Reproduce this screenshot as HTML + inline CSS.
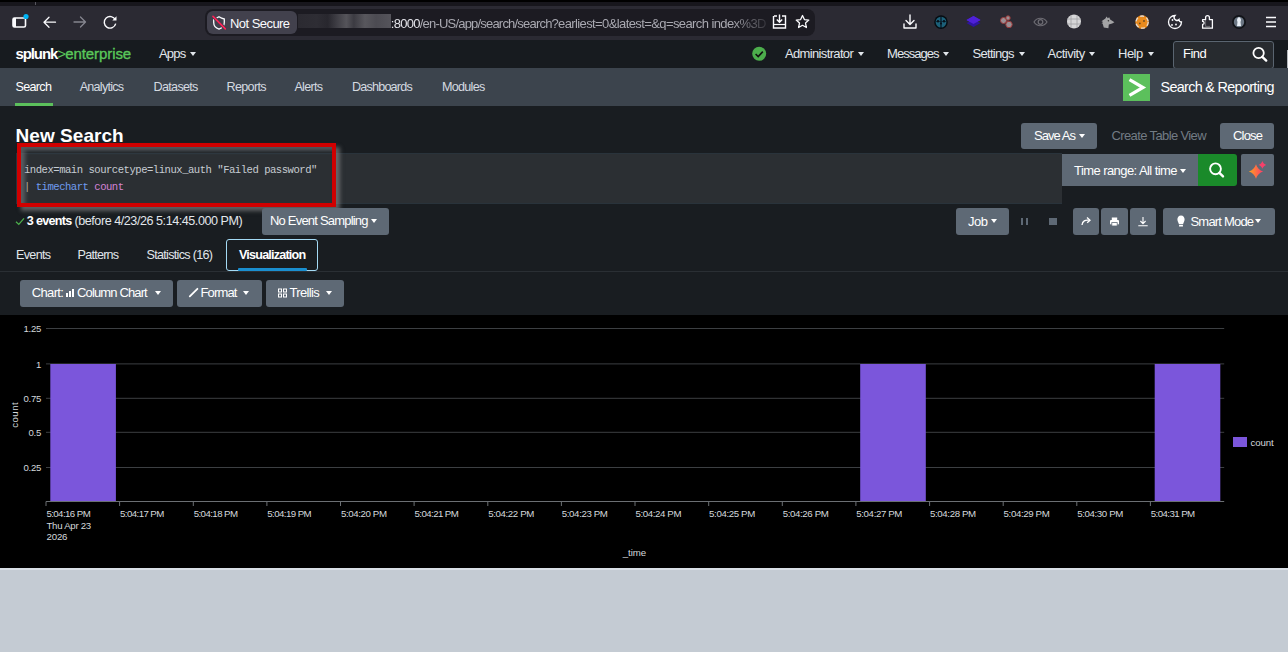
<!DOCTYPE html>
<html><head><meta charset="utf-8">
<style>
*{box-sizing:border-box;margin:0;padding:0}
html,body{width:1288px;height:652px;overflow:hidden;background:#c4cbd3;font-family:"Liberation Sans",sans-serif;position:relative}
.a{position:absolute}
.t{position:absolute;white-space:nowrap;line-height:1}
.btn{position:absolute;background:#5c6773;border-radius:3px}
svg{position:absolute;overflow:visible}
</style></head><body>
<!-- browser chrome -->
<div class="a" style="left:0;top:0;width:1288px;height:2px;background:#000"></div>
<div class="a" style="left:0;top:2px;width:1288px;height:4px;background:#17161c"></div>
<div class="a" style="left:35px;top:2px;width:1px;height:3px;background:#55545c"></div>
<div class="a" style="left:0;top:6px;width:1288px;height:34px;background:#2b2a33"></div>
<!-- tab/sidebar icon -->
<svg style="left:0;top:0" width="140" height="40">
 <rect x="13" y="18" width="12.5" height="9" rx="1.5" fill="none" stroke="#fbfbfe" stroke-width="1.6"/>
 <rect x="13" y="18" width="3" height="9" fill="#fbfbfe"/>
 <circle cx="26" cy="16.5" r="2.6" fill="#00b3f4"/>
 <path d="M44 22.2 H55.5 M49 17.2 L44 22.2 L49 27.2" fill="none" stroke="#fbfbfe" stroke-width="1.3" stroke-linecap="round" stroke-linejoin="round"/>
 <path d="M74 22 H85.5 M80.5 17 L85.5 22 L80.5 27" fill="none" stroke="#85858f" stroke-width="1.3" stroke-linecap="round" stroke-linejoin="round"/>
 <path d="M115.3 19.8 A5.8 5.8 0 1 0 115.7 23.6" fill="none" stroke="#fbfbfe" stroke-width="1.4"/>
 <path d="M112.3 20.5 L116.5 20.5 L116.5 16.3 Z" fill="#fbfbfe"/>
</svg>
<!-- url bar -->
<div class="a" style="left:205px;top:9px;width:610px;height:27px;background:#1c1b22;border-radius:8px"></div>
<div class="a" style="left:207px;top:11px;width:90px;height:23px;background:#42414d;border-radius:6px"></div>
<svg style="left:0;top:0" width="240" height="40">
 <path d="M219 16.8 C217.4 17.9 215.6 18.7 213.7 19 V22.6 C213.7 25.9 216 28.2 219 29.2 C222 28.2 224.3 25.9 224.3 22.6 V19 C222.4 18.7 220.6 17.9 219 16.8 Z" fill="none" stroke="#fbfbfe" stroke-width="1.3"/>
 <path d="M213 16.4 L225.3 28.9" stroke="#42414d" stroke-width="3.4"/>
 <path d="M213 16.4 L225.3 28.9" stroke="#ff2057" stroke-width="1.6" stroke-linecap="round"/>
</svg>
<div class="t" style="left:230px;top:17px;font-size:13px;color:#fbfbfe;letter-spacing:-0.55px">Not Secure</div>
<div class="t" style="left:390.8px;top:16.6px;font-size:13px;color:#a9a9b1;letter-spacing:-0.72px;width:378px;overflow:hidden;-webkit-mask-image:linear-gradient(90deg,#000 90%,rgba(0,0,0,.1) 100%)"><span style="color:#e2e2e8">:8000</span><span style="letter-spacing:-0.8px">/en-US/app/search/search?</span><span style="letter-spacing:-0.6px">earliest=0&amp;latest=&amp;q=search index%3D</span></div>
<div class="a" style="left:298px;top:13.5px;width:93px;height:14.5px;background:linear-gradient(90deg,#2b2a31 0%,#2e2d34 20%,#28272e 32%,#3f3e45 42%,#55545a 52%,#3c3b42 60%,#58575d 72%,#4c4b52 84%,#55545b 100%)"></div>
<svg style="left:0;top:0" width="820" height="40">
 <path d="M774 16 H777 M782 16 H785.5 V28 H773.5 V16" fill="none" stroke="#fbfbfe" stroke-width="1.4"/>
 <path d="M773.5 24.5 H785.5" stroke="#fbfbfe" stroke-width="1.2"/>
 <path d="M779.5 14.5 V22 M776.8 19.5 L779.5 22.3 L782.2 19.5" fill="none" stroke="#fbfbfe" stroke-width="1.4"/>
 <path d="M802.5 15.5 L804.4 19.6 L808.8 20.1 L805.5 23.1 L806.4 27.5 L802.5 25.3 L798.6 27.5 L799.5 23.1 L796.2 20.1 L800.6 19.6 Z" fill="none" stroke="#fbfbfe" stroke-width="1.3" stroke-linejoin="round"/>
</svg>
<!-- extension icons -->
<svg style="left:0;top:0" width="1288" height="40">
 <path d="M910 15 V24 M906 20.5 L910 24.5 L914 20.5 M904 24 V28 H916 V24" fill="none" stroke="#fbfbfe" stroke-width="1.4" stroke-linecap="round" stroke-linejoin="round"/>
 <circle cx="941" cy="22.1" r="6.8" fill="#060d12"/>
 <circle cx="941" cy="22.1" r="5.4" fill="#1c6079"/>
 <path d="M941 16 V28.5" stroke="#06101a" stroke-width="1.1"/>
 <path d="M935.5 21.5 H946.5" stroke="#0a1a24" stroke-width="0.9" opacity=".6"/>
 <circle cx="938" cy="21.2" r="1.2" fill="#06101a"/><circle cx="944" cy="21.2" r="1.2" fill="#06101a"/><circle cx="941" cy="23.6" r="1" fill="#06101a"/>
 <path d="M966.5 20 L973.5 16 L980.5 20 L973.5 24 Z" fill="#4a1fd0"/>
 <path d="M966.5 23 L973.5 27 L980.5 23 L973.5 20 Z" fill="#2e14a0"/>
 <path d="M966.5 20 L973.5 16 L980.5 20 L973.5 24 Z" fill="#4f20d8"/>
 <circle cx="1003.5" cy="20.5" r="3" fill="#9a8f94" stroke="#9b3a3a" stroke-width="1"/>
 <circle cx="1008" cy="18" r="2.2" fill="#9a8f94" stroke="#9b3a3a" stroke-width="1"/>
 <circle cx="1009" cy="24.5" r="3.2" fill="#9a8f94" stroke="#9b3a3a" stroke-width="1"/>
 <path d="M1034 22 C1037 17 1044 17 1047 22 C1044 27 1037 27 1034 22 Z" fill="none" stroke="#6d6c73" stroke-width="1.2"/>
 <circle cx="1040.5" cy="22" r="2.3" fill="none" stroke="#6d6c73" stroke-width="1.2"/>
 <circle cx="1074" cy="21.5" r="7" fill="#d6d6d8"/>
 <path d="M1067 19 H1081 M1067 24 H1081 M1071 15 V28 M1077 15 V28" stroke="#9e9ea2" stroke-width="0.8"/>
 <path d="M1101.5 21.2 L1105.4 18.6 L1106.6 16.4 L1107.8 18.2 L1109.2 17.2 L1110.2 19.6 L1114.4 22.3 L1112.2 23.6 L1108.8 24.6 L1108.4 28.2 L1103.8 27.4 L1102.6 23.6 L1101.5 23.2 L1103.2 22 Z" fill="#a3a3a5"/><circle cx="1108.4" cy="20.8" r="0.8" fill="#333"/>
 <circle cx="1142.1" cy="22.1" r="6.8" fill="#e88a1e"/>
 <circle cx="1142.1" cy="22.1" r="6.1" fill="none" stroke="#e2e4ea" stroke-width="1.3" stroke-dasharray="4 2.5" opacity=".9"/>
 <circle cx="1139.8" cy="23.4" r="0.9" fill="#6a4a20"/><circle cx="1144" cy="21" r="0.9" fill="#6a4a20"/>
 <path d="M1175 15.5 A6.5 6.5 0 1 0 1181.5 22 A2.5 2.5 0 0 1 1179 19.5 A2.5 2.5 0 0 1 1175 15.5 Z" fill="none" stroke="#fbfbfe" stroke-width="1.3"/>
 <circle cx="1172.5" cy="20" r="0.9" fill="#fbfbfe"/><circle cx="1176" cy="24.5" r="0.9" fill="#fbfbfe"/><circle cx="1172" cy="25" r="0.9" fill="#fbfbfe"/><circle cx="1177" cy="20.5" r="0.8" fill="#fbfbfe"/>
 <path d="M1202.6 28.2 H1212.4 V19.6 H1209.4 V17.6 A1.9 1.9 0 0 0 1205.6 17.6 V19.6 H1202.6 V21.4 C1204.6 21.4 1204.6 24.4 1202.6 24.4 Z" fill="none" stroke="#fbfbfe" stroke-width="1.3" stroke-linejoin="round"/><path d="M1205.6 19.6 V26.4 H1210" fill="none" stroke="#fbfbfe" stroke-width="0.6" opacity=".5"/>
 <circle cx="1239" cy="22" r="7" fill="#111318"/>
 <circle cx="1239" cy="22" r="5.2" fill="#6a7583"/>
 <path d="M1239 17 C1241 18 1241.5 20 1240.5 22 L1241 26 H1237 L1237.5 22 C1236.5 20 1237 18 1239 17 Z" fill="#e8eef5"/>
 <path d="M1266 17.5 H1276 M1266 22 H1276 M1266 26.5 H1276" stroke="#fbfbfe" stroke-width="1.4"/>
</svg>
<div class="a" style="left:0px;top:40px;width:1288px;height:28px;background:#171b1f;"></div>
<div class="t" style="left:15.5px;top:45.5px;font-size:15px;color:#fff;font-weight:700;letter-spacing:-1.1px;font-family:'Liberation Sans';">splunk</div>
<div class="t" style="left:57.3px;top:45.8px;font-size:15px;color:#5ac85a;font-weight:400;letter-spacing:-1px;font-family:'Liberation Sans';">&gt;</div>
<div class="t" style="left:65.2px;top:45.8px;font-size:15px;color:#5ac85a;font-weight:400;letter-spacing:-0.08px;font-family:'Liberation Sans';-webkit-text-stroke:0.35px #5ac85a">enterprise</div>
<div class="t" style="left:159.0px;top:46.6px;font-size:13px;color:#e1e6eb;font-weight:400;letter-spacing:-0.8px;font-family:'Liberation Sans';">Apps</div>
<div class="a" style="left:189.5px;top:51.8px;width:0;height:0;border-left:3.5px solid transparent;border-right:3.5px solid transparent;border-top:4px solid #e1e6eb"></div>
<svg style="left:0;top:0" width="1288" height="70"><circle cx="759.2" cy="53.8" r="7" fill="#4cae4c"/><path d="M755.6 54 L758.2 56.6 L762.8 51.6" fill="none" stroke="#111" stroke-width="1.6"/></svg>
<div class="t" style="left:785.0px;top:46.8px;font-size:13px;color:#e1e6eb;font-weight:400;letter-spacing:-0.65px;font-family:'Liberation Sans';">Administrator</div>
<div class="a" style="left:858px;top:51.8px;width:0;height:0;border-left:3.5px solid transparent;border-right:3.5px solid transparent;border-top:4px solid #e1e6eb"></div>
<div class="t" style="left:887.0px;top:46.8px;font-size:13px;color:#e1e6eb;font-weight:400;letter-spacing:-0.95px;font-family:'Liberation Sans';">Messages</div>
<div class="a" style="left:943.3px;top:51.8px;width:0;height:0;border-left:3.5px solid transparent;border-right:3.5px solid transparent;border-top:4px solid #e1e6eb"></div>
<div class="t" style="left:972.5px;top:46.8px;font-size:13px;color:#e1e6eb;font-weight:400;letter-spacing:-0.7px;font-family:'Liberation Sans';">Settings</div>
<div class="a" style="left:1018.7px;top:51.8px;width:0;height:0;border-left:3.5px solid transparent;border-right:3.5px solid transparent;border-top:4px solid #e1e6eb"></div>
<div class="t" style="left:1047.5px;top:46.8px;font-size:13px;color:#e1e6eb;font-weight:400;letter-spacing:-0.5px;font-family:'Liberation Sans';">Activity</div>
<div class="a" style="left:1089.3px;top:51.8px;width:0;height:0;border-left:3.5px solid transparent;border-right:3.5px solid transparent;border-top:4px solid #e1e6eb"></div>
<div class="t" style="left:1118.0px;top:46.8px;font-size:13px;color:#e1e6eb;font-weight:400;letter-spacing:-0.5px;font-family:'Liberation Sans';">Help</div>
<div class="a" style="left:1148px;top:51.8px;width:0;height:0;border-left:3.5px solid transparent;border-right:3.5px solid transparent;border-top:4px solid #e1e6eb"></div>
<div class="a" style="left:1173px;top:40.5px;width:101px;height:28px;background:#272b2f;border:1.5px solid #5a6570;border-radius:3px"></div>
<div class="t" style="left:1183.0px;top:47.2px;font-size:13px;color:#fff;font-weight:400;letter-spacing:-0.5px;font-family:'Liberation Sans';">Find</div>
<svg style="left:0;top:0" width="1288" height="70"><circle cx="1258.6" cy="53" r="5.2" fill="none" stroke="#fff" stroke-width="1.8"/><path d="M1262.3 56.8 L1266.2 60.6" stroke="#fff" stroke-width="2.4" stroke-linecap="round"/></svg>
<div class="a" style="left:1287px;top:50px;width:1px;height:404px;background:#b4b8bc;"></div>
<div class="a" style="left:0px;top:68px;width:1288px;height:38px;background:#3c444d;"></div>
<div class="t" style="left:15.5px;top:80.7px;font-size:12.6px;color:#fff;font-weight:400;letter-spacing:-0.7px;font-family:'Liberation Sans';">Search</div>
<div class="t" style="left:79.7px;top:80.7px;font-size:12.6px;color:#d4dae0;font-weight:400;letter-spacing:-0.75px;font-family:'Liberation Sans';">Analytics</div>
<div class="t" style="left:153.6px;top:80.7px;font-size:12.6px;color:#d4dae0;font-weight:400;letter-spacing:-0.7px;font-family:'Liberation Sans';">Datasets</div>
<div class="t" style="left:226.6px;top:80.7px;font-size:12.6px;color:#d4dae0;font-weight:400;letter-spacing:-0.7px;font-family:'Liberation Sans';">Reports</div>
<div class="t" style="left:294.4px;top:80.7px;font-size:12.6px;color:#d4dae0;font-weight:400;letter-spacing:-0.7px;font-family:'Liberation Sans';">Alerts</div>
<div class="t" style="left:352.0px;top:80.7px;font-size:12.6px;color:#d4dae0;font-weight:400;letter-spacing:-0.8px;font-family:'Liberation Sans';">Dashboards</div>
<div class="t" style="left:441.9px;top:80.7px;font-size:12.6px;color:#d4dae0;font-weight:400;letter-spacing:-0.7px;font-family:'Liberation Sans';">Modules</div>
<div class="a" style="left:15px;top:103px;width:38px;height:3px;background:#5cc05c;"></div>
<div class="a" style="left:1123px;top:74px;width:27px;height:27px;background:#5cc05c;"></div>
<svg style="left:0;top:0" width="1288" height="110"><path d="M1129.5 79.6 L1143 87.5 L1129.5 95.4" fill="none" stroke="#fff" stroke-width="3.2" stroke-linejoin="miter"/></svg>
<div class="t" style="left:1160.5px;top:79.6px;font-size:14.4px;color:#fff;font-weight:400;letter-spacing:-0.68px;font-family:'Liberation Sans';">Search &amp; Reporting</div>
<div class="a" style="left:0px;top:106px;width:1288px;height:209px;background:#191d21;"></div>
<div class="t" style="left:15.5px;top:125.8px;font-size:19px;color:#fff;font-weight:700;letter-spacing:0.05px;font-family:'Liberation Sans';">New Search</div>
<div class="a" style="left:1021px;top:123px;width:76px;height:26px;background:#5e6975;border-radius:3px"></div>
<div class="t" style="left:1034.0px;top:129.0px;font-size:13px;color:#fff;font-weight:400;letter-spacing:-0.95px;font-family:'Liberation Sans';">Save As</div>
<div class="a" style="left:1078.5px;top:133.5px;width:0;height:0;border-left:3.5px solid transparent;border-right:3.5px solid transparent;border-top:4px solid #fff"></div>
<div class="t" style="left:1111.5px;top:129.0px;font-size:13px;color:#727b84;font-weight:400;letter-spacing:-0.62px;font-family:'Liberation Sans';">Create Table View</div>
<div class="a" style="left:1220px;top:123px;width:54px;height:26px;background:#5e6975;border-radius:3px"></div>
<div class="t" style="left:1233.0px;top:129.0px;font-size:13px;color:#fff;font-weight:400;letter-spacing:-0.8px;font-family:'Liberation Sans';">Close</div>
<div class="a" style="left:16px;top:153px;width:1046px;height:51px;background:#2b2f33;border-top:1px solid #29333b;border-bottom:1px solid #29333b;border-left:1px solid #29333b"></div>
<div class="a" style="left:1062px;top:154px;width:136px;height:32px;background:#5e6975;border-radius:0"></div>
<div class="t" style="left:1074.0px;top:163.5px;font-size:13px;color:#fff;font-weight:400;letter-spacing:-0.57px;font-family:'Liberation Sans';">Time range: All time</div>
<div class="a" style="left:1179.5px;top:168.5px;width:0;height:0;border-left:3.5px solid transparent;border-right:3.5px solid transparent;border-top:4px solid #fff"></div>
<div class="a" style="left:1198px;top:154px;width:38.5px;height:32px;background:#1a8a2a;border-radius:0 3px 3px 0"></div>
<svg style="left:0;top:0" width="1288" height="220"><circle cx="1215.5" cy="168.8" r="5.4" fill="none" stroke="#fff" stroke-width="1.9"/><path d="M1219.4 172.8 L1223 176.4" stroke="#fff" stroke-width="2.4" stroke-linecap="round"/></svg>
<div class="a" style="left:1241px;top:154px;width:32.5px;height:32px;background:#5e6975;border-radius:2px"></div>
<svg style="left:0;top:0" width="1288" height="220"><defs><linearGradient id="sg" x1="0" y1="0" x2="1" y2="0"><stop offset="0" stop-color="#ffa41c"/><stop offset="1" stop-color="#ff3a6c"/></linearGradient></defs><path d="M1256 164.3 C1257.08 167.90 1259.60 170.42 1263.2 171.5 C1259.60 172.58 1257.08 175.10 1256 178.7 C1254.92 175.10 1252.40 172.58 1248.8 171.5 C1252.40 170.42 1254.92 167.90 1256 164.3 Z" fill="url(#sg)"/><path d="M1262.4 161.0 C1262.99 162.95 1264.35 164.31 1266.3000000000002 164.9 C1264.35 165.49 1262.99 166.85 1262.4 168.8 C1261.82 166.85 1260.45 165.49 1258.5 164.9 C1260.45 164.31 1261.82 162.95 1262.4 161.0 Z" fill="#f7406a"/></svg>
<div class="t" style="left:24.0px;top:165.0px;font-size:10.6px;color:#c6ccd2;font-weight:400;letter-spacing:-0.5px;font-family:'Liberation Mono';">index=main sourcetype=linux_auth "Failed password"</div>
<div class="t" style="left:24.0px;top:182.2px;font-size:10.6px;color:#c6ccd2;font-weight:400;letter-spacing:-0.5px;font-family:'Liberation Mono';"><span style="color:#b9b09a">|</span> <span style="color:#6f9cf0">timechart</span> <span style="color:#d383d6">count</span></div>
<div class="a" style="left:17px;top:143px;width:319px;height:64px;background:transparent;border:4px solid #d00000;box-shadow:4px 4px 4px rgba(150,150,150,.55), inset 4px 4px 4px rgba(120,125,130,.6)"></div>
<svg style="left:0;top:0" width="1288" height="240"><path d="M16 221.8 L18.8 224.4 L24 218.4" fill="none" stroke="#4cae4c" stroke-width="1.3"/></svg>
<div class="t" style="left:26.8px;top:214.8px;font-size:12.6px;color:#fff;font-weight:700;letter-spacing:-0.7px;font-family:'Liberation Sans';">3 events</div>
<div class="t" style="left:74.5px;top:214.8px;font-size:12.6px;color:#e1e6eb;font-weight:400;letter-spacing:-0.46px;font-family:'Liberation Sans';">(before 4/23/26 5:14:45.000 PM)</div>
<div class="a" style="left:261.5px;top:208px;width:127.5px;height:26.6px;background:#5e6975;border-radius:3px"></div>
<div class="t" style="left:270.0px;top:214.0px;font-size:13px;color:#fff;font-weight:400;letter-spacing:-0.8px;font-family:'Liberation Sans';">No Event Sampling</div>
<div class="a" style="left:371px;top:218.5px;width:0;height:0;border-left:3.5px solid transparent;border-right:3.5px solid transparent;border-top:4px solid #fff"></div>
<div class="a" style="left:955.5px;top:208px;width:53.5px;height:26.5px;background:#5e6975;border-radius:3px"></div>
<div class="t" style="left:968.0px;top:214.5px;font-size:13px;color:#fff;font-weight:400;letter-spacing:-0.5px;font-family:'Liberation Sans';">Job</div>
<div class="a" style="left:990.5px;top:218.5px;width:0;height:0;border-left:3.5px solid transparent;border-right:3.5px solid transparent;border-top:4px solid #fff"></div>
<div class="a" style="left:1021px;top:217.5px;width:2px;height:7.5px;background:#5e6975;"></div>
<div class="a" style="left:1026px;top:217.5px;width:2px;height:7.5px;background:#5e6975;"></div>
<div class="a" style="left:1049px;top:217.5px;width:8px;height:7.5px;background:#5e6975;"></div>
<div class="a" style="left:1072.5px;top:208px;width:26.5px;height:26.5px;background:#5e6975;border-radius:3px"></div>
<div class="a" style="left:1101px;top:208px;width:26.5px;height:26.5px;background:#5e6975;border-radius:3px"></div>
<div class="a" style="left:1129.5px;top:208px;width:26.5px;height:26.5px;background:#5e6975;border-radius:3px"></div>
<svg style="left:0;top:0" width="1288" height="240"><path d="M1082 225 C1082.5 221 1085 219.5 1089.5 220.2" fill="none" stroke="#fff" stroke-width="1.3"/><path d="M1087 217.6 L1090 220.2 L1087.2 222.8" fill="none" stroke="#fff" stroke-width="1.3"/><rect x="1111.8" y="217.5" width="5.4" height="3" fill="#fff"/><rect x="1110" y="220" width="9" height="4.5" rx="1" fill="#fff"/><rect x="1111.8" y="222.6" width="5.4" height="3.4" fill="#fff" stroke="#5e6975" stroke-width="0.8"/><path d="M1143 217 V223.5 M1140.4 221 L1143 223.6 L1145.6 221 M1138.3 225.8 H1147.7" fill="none" stroke="#fff" stroke-width="1.1"/></svg>
<div class="a" style="left:1162.5px;top:208px;width:112px;height:26.5px;background:#5e6975;border-radius:3px"></div>
<svg style="left:0;top:0" width="1288" height="240"><path d="M1181 215.5 C1178.6 215.5 1177.4 217.6 1177.4 219.4 C1177.4 221.4 1178.6 222.3 1178.9 224.3 H1183.1 C1183.4 222.3 1184.6 221.4 1184.6 219.4 C1184.6 217.6 1183.4 215.5 1181 215.5 Z" fill="#fff"/><rect x="1179" y="225" width="4" height="1.6" rx=".5" fill="#fff"/></svg>
<div class="t" style="left:1190.5px;top:214.5px;font-size:13px;color:#fff;font-weight:400;letter-spacing:-0.8px;font-family:'Liberation Sans';">Smart Mode</div>
<div class="a" style="left:1255px;top:219px;width:0;height:0;border-left:3.5px solid transparent;border-right:3.5px solid transparent;border-top:4px solid #fff"></div>
<div class="t" style="left:16.0px;top:248.6px;font-size:12.6px;color:#e1e6eb;font-weight:400;letter-spacing:-0.68px;font-family:'Liberation Sans';">Events</div>
<div class="t" style="left:77.5px;top:248.6px;font-size:12.6px;color:#e1e6eb;font-weight:400;letter-spacing:-0.75px;font-family:'Liberation Sans';">Patterns</div>
<div class="t" style="left:146.5px;top:248.6px;font-size:12.6px;color:#e1e6eb;font-weight:400;letter-spacing:-0.7px;font-family:'Liberation Sans';">Statistics (16)</div>
<div class="a" style="left:226px;top:239px;width:92px;height:32px;background:transparent;border:1.7px solid #a4daf4;border-radius:3px"></div>
<div class="t" style="left:239.0px;top:248.6px;font-size:12.6px;color:#fff;font-weight:700;letter-spacing:-0.8px;font-family:'Liberation Sans';">Visualization</div>
<div class="a" style="left:238px;top:268px;width:69px;height:2.5px;background:#1a8fd0;border-radius:1px"></div>
<div class="a" style="left:0px;top:271px;width:1288px;height:1px;background:#2a2f34;"></div>
<div class="a" style="left:20px;top:280px;width:152.5px;height:26.5px;background:#5e6975;border-radius:3px"></div>
<div class="t" style="left:31.8px;top:286.0px;font-size:13px;color:#fff;font-weight:400;letter-spacing:-0.65px;font-family:'Liberation Sans';">Chart:</div>
<div class="a" style="left:66px;top:292.7px;width:2.2px;height:4px;background:#fff;"></div>
<div class="a" style="left:69px;top:290.6px;width:2.2px;height:6.1px;background:#fff;"></div>
<div class="a" style="left:72px;top:288.5px;width:2.2px;height:8.2px;background:#fff;"></div>
<div class="t" style="left:77.0px;top:286.0px;font-size:13px;color:#fff;font-weight:400;letter-spacing:-0.86px;font-family:'Liberation Sans';">Column Chart</div>
<div class="a" style="left:154.5px;top:291px;width:0;height:0;border-left:3.5px solid transparent;border-right:3.5px solid transparent;border-top:4px solid #fff"></div>
<div class="a" style="left:177px;top:280px;width:84.5px;height:26.5px;background:#5e6975;border-radius:3px"></div>
<svg style="left:0;top:0" width="1288" height="320"><path d="M189.8 296.4 L197.4 288.8" stroke="#fff" stroke-width="1.8" stroke-linecap="round"/></svg>
<div class="t" style="left:200.5px;top:286.0px;font-size:13px;color:#fff;font-weight:400;letter-spacing:-0.85px;font-family:'Liberation Sans';">Format</div>
<div class="a" style="left:243px;top:291px;width:0;height:0;border-left:3.5px solid transparent;border-right:3.5px solid transparent;border-top:4px solid #fff"></div>
<div class="a" style="left:266px;top:280px;width:78px;height:26.5px;background:#5e6975;border-radius:3px"></div>
<svg style="left:0;top:0" width="1288" height="320"><g fill="none" stroke="#fff" stroke-width="1"><rect x="278.5" y="289" width="3" height="3"/><rect x="283.5" y="289" width="3" height="3"/><rect x="278.5" y="294" width="3" height="3"/><rect x="283.5" y="294" width="3" height="3"/></g></svg>
<div class="t" style="left:289.5px;top:286.0px;font-size:13px;color:#fff;font-weight:400;letter-spacing:-0.65px;font-family:'Liberation Sans';">Trellis</div>
<div class="a" style="left:325.5px;top:291px;width:0;height:0;border-left:3.5px solid transparent;border-right:3.5px solid transparent;border-top:4px solid #fff"></div>
<div class="a" style="left:0px;top:315px;width:1288px;height:253px;background:#000;"></div>
<div class="a" style="left:0px;top:568px;width:1288px;height:2px;background:#d9dfe6;"></div>
<svg style="left:0;top:0" width="1288" height="652"><path d="M46.0 328.5 H1224.2" stroke="#3c3f42" stroke-width="1"/><path d="M46.0 363.9 H1224.2" stroke="#3c3f42" stroke-width="1"/><path d="M46.0 398.3 H1224.2" stroke="#3c3f42" stroke-width="1"/><path d="M46.0 432.3 H1224.2" stroke="#3c3f42" stroke-width="1"/><path d="M46.0 467.5 H1224.2" stroke="#3c3f42" stroke-width="1"/><path d="M46.0 501.5 H1224.2" stroke="#6b6f73" stroke-width="1"/><path d="M46.0 501.5 V506" stroke="#6b6f73" stroke-width="1"/><path d="M119.6 501.5 V506" stroke="#6b6f73" stroke-width="1"/><path d="M193.3 501.5 V506" stroke="#6b6f73" stroke-width="1"/><path d="M266.9 501.5 V506" stroke="#6b6f73" stroke-width="1"/><path d="M340.5 501.5 V506" stroke="#6b6f73" stroke-width="1"/><path d="M414.1 501.5 V506" stroke="#6b6f73" stroke-width="1"/><path d="M487.8 501.5 V506" stroke="#6b6f73" stroke-width="1"/><path d="M561.4 501.5 V506" stroke="#6b6f73" stroke-width="1"/><path d="M635.0 501.5 V506" stroke="#6b6f73" stroke-width="1"/><path d="M708.7 501.5 V506" stroke="#6b6f73" stroke-width="1"/><path d="M782.3 501.5 V506" stroke="#6b6f73" stroke-width="1"/><path d="M855.9 501.5 V506" stroke="#6b6f73" stroke-width="1"/><path d="M929.6 501.5 V506" stroke="#6b6f73" stroke-width="1"/><path d="M1003.2 501.5 V506" stroke="#6b6f73" stroke-width="1"/><path d="M1076.8 501.5 V506" stroke="#6b6f73" stroke-width="1"/><path d="M1150.4 501.5 V506" stroke="#6b6f73" stroke-width="1"/><rect x="50.3" y="364" width="65.6" height="137" fill="#7b56db"/><rect x="860.2" y="364" width="65.6" height="137" fill="#7b56db"/><rect x="1154.7" y="364" width="65.6" height="137" fill="#7b56db"/></svg>
<div class="t" style="left:0;width:41px;text-align:right;top:324.4px;font-size:9.6px;color:#d4d8dc;letter-spacing:-0.3px">1.25</div>
<div class="t" style="left:0;width:41px;text-align:right;top:359.8px;font-size:9.6px;color:#d4d8dc;letter-spacing:-0.3px">1</div>
<div class="t" style="left:0;width:41px;text-align:right;top:394.2px;font-size:9.6px;color:#d4d8dc;letter-spacing:-0.3px">0.75</div>
<div class="t" style="left:0;width:41px;text-align:right;top:428.2px;font-size:9.6px;color:#d4d8dc;letter-spacing:-0.3px">0.5</div>
<div class="t" style="left:0;width:41px;text-align:right;top:463.4px;font-size:9.6px;color:#d4d8dc;letter-spacing:-0.3px">0.25</div>
<div class="t" style="left:46.4px;top:509.2px;font-size:9.7px;color:#d4d8dc;font-weight:400;letter-spacing:-0.58px;font-family:'Liberation Sans';">5:04:16 PM</div>
<div class="t" style="left:120.0px;top:509.2px;font-size:9.7px;color:#d4d8dc;font-weight:400;letter-spacing:-0.58px;font-family:'Liberation Sans';">5:04:17 PM</div>
<div class="t" style="left:193.7px;top:509.2px;font-size:9.7px;color:#d4d8dc;font-weight:400;letter-spacing:-0.58px;font-family:'Liberation Sans';">5:04:18 PM</div>
<div class="t" style="left:267.3px;top:509.2px;font-size:9.7px;color:#d4d8dc;font-weight:400;letter-spacing:-0.58px;font-family:'Liberation Sans';">5:04:19 PM</div>
<div class="t" style="left:340.9px;top:509.2px;font-size:9.7px;color:#d4d8dc;font-weight:400;letter-spacing:-0.38px;font-family:'Liberation Sans';">5:04:20 PM</div>
<div class="t" style="left:414.5px;top:509.2px;font-size:9.7px;color:#d4d8dc;font-weight:400;letter-spacing:-0.58px;font-family:'Liberation Sans';">5:04:21 PM</div>
<div class="t" style="left:488.2px;top:509.2px;font-size:9.7px;color:#d4d8dc;font-weight:400;letter-spacing:-0.38px;font-family:'Liberation Sans';">5:04:22 PM</div>
<div class="t" style="left:561.8px;top:509.2px;font-size:9.7px;color:#d4d8dc;font-weight:400;letter-spacing:-0.38px;font-family:'Liberation Sans';">5:04:23 PM</div>
<div class="t" style="left:635.4px;top:509.2px;font-size:9.7px;color:#d4d8dc;font-weight:400;letter-spacing:-0.38px;font-family:'Liberation Sans';">5:04:24 PM</div>
<div class="t" style="left:709.1px;top:509.2px;font-size:9.7px;color:#d4d8dc;font-weight:400;letter-spacing:-0.38px;font-family:'Liberation Sans';">5:04:25 PM</div>
<div class="t" style="left:782.7px;top:509.2px;font-size:9.7px;color:#d4d8dc;font-weight:400;letter-spacing:-0.38px;font-family:'Liberation Sans';">5:04:26 PM</div>
<div class="t" style="left:856.3px;top:509.2px;font-size:9.7px;color:#d4d8dc;font-weight:400;letter-spacing:-0.38px;font-family:'Liberation Sans';">5:04:27 PM</div>
<div class="t" style="left:930.0px;top:509.2px;font-size:9.7px;color:#d4d8dc;font-weight:400;letter-spacing:-0.38px;font-family:'Liberation Sans';">5:04:28 PM</div>
<div class="t" style="left:1003.6px;top:509.2px;font-size:9.7px;color:#d4d8dc;font-weight:400;letter-spacing:-0.38px;font-family:'Liberation Sans';">5:04:29 PM</div>
<div class="t" style="left:1077.2px;top:509.2px;font-size:9.7px;color:#d4d8dc;font-weight:400;letter-spacing:-0.38px;font-family:'Liberation Sans';">5:04:30 PM</div>
<div class="t" style="left:1150.8px;top:509.2px;font-size:9.7px;color:#d4d8dc;font-weight:400;letter-spacing:-0.58px;font-family:'Liberation Sans';">5:04:31 PM</div>
<div class="t" style="left:46.5px;top:520.6px;font-size:9.7px;color:#d4d8dc;font-weight:400;letter-spacing:-0.3px;font-family:'Liberation Sans';">Thu Apr 23</div>
<div class="t" style="left:46.5px;top:532.4px;font-size:9.7px;color:#d4d8dc;font-weight:400;letter-spacing:-0.2px;font-family:'Liberation Sans';">2026</div>
<div class="t" style="left:622.8px;top:548.1px;font-size:9.7px;color:#d4d8dc;font-weight:400;letter-spacing:-0.1px;font-family:'Liberation Sans';">_time</div>
<div class="t" style="left:-0.5px;top:410px;font-size:9.7px;color:#d4d8dc;transform:rotate(-90deg);transform-origin:center;width:30px;text-align:center;letter-spacing:0.45px">count</div>
<div class="a" style="left:1233px;top:437.3px;width:13.6px;height:10px;background:#7b56db;"></div>
<div class="t" style="left:1250.5px;top:438.4px;font-size:9.7px;color:#d4d8dc;font-weight:400;letter-spacing:-0.1px;font-family:'Liberation Sans';">count</div>
</body></html>
